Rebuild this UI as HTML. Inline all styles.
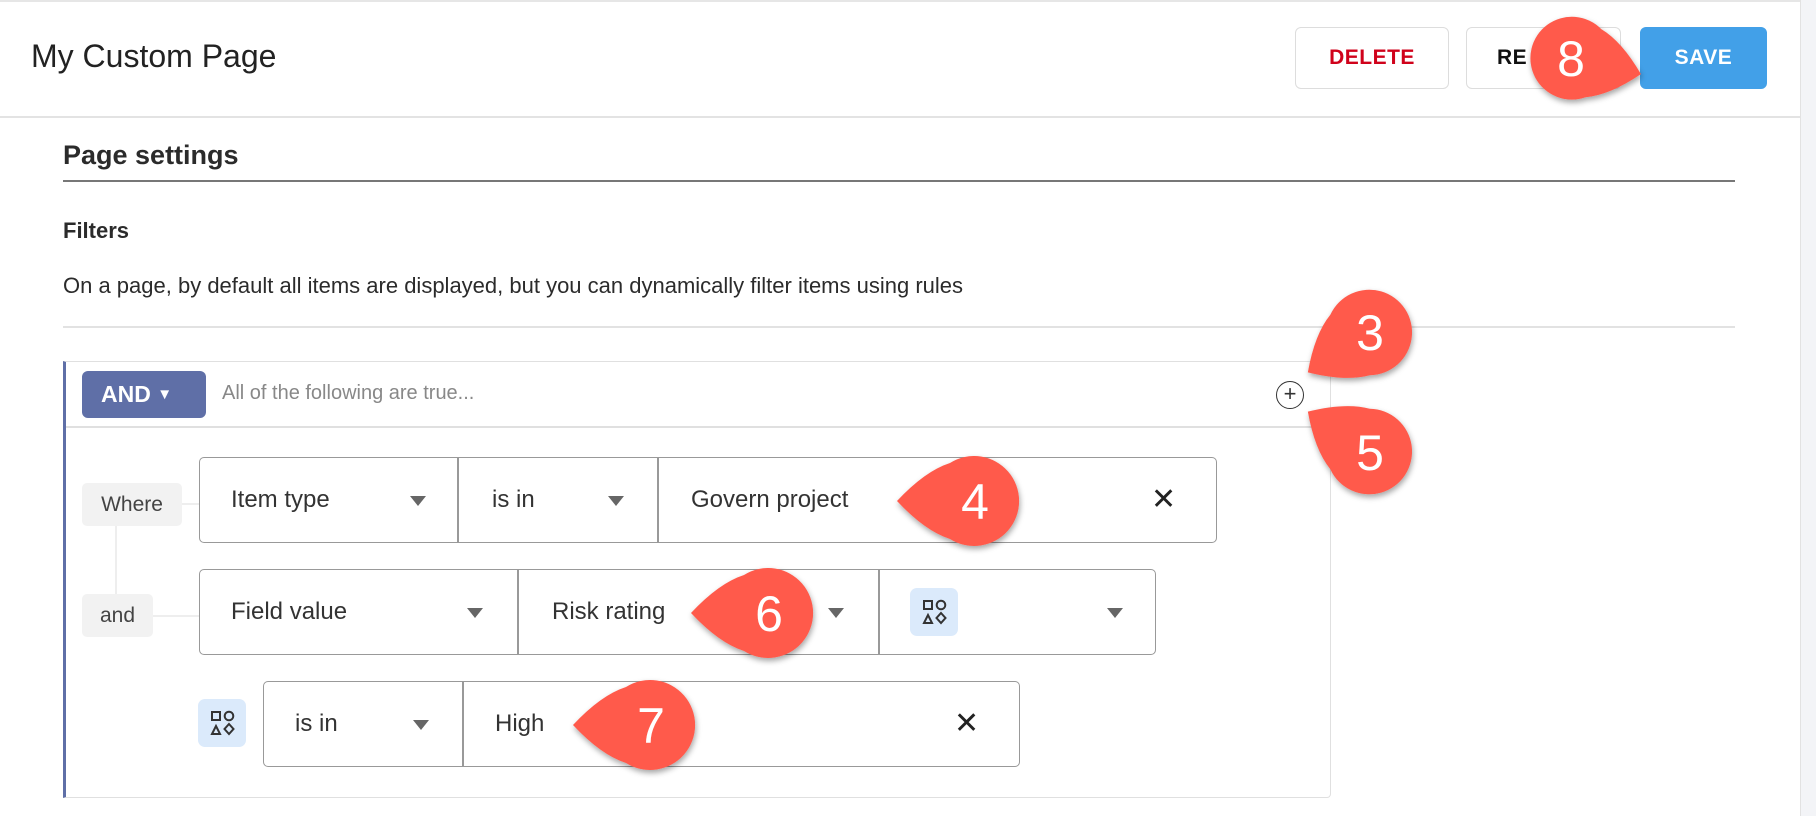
<!DOCTYPE html>
<html><head><meta charset="utf-8"><style>
*{box-sizing:border-box;margin:0;padding:0}
body{width:1816px;height:816px;background:#fff;font-family:"Liberation Sans",sans-serif;color:#333;position:relative;overflow:hidden}
.a{position:absolute}
.btn{position:absolute;top:27px;height:62px;border:1.5px solid #ddd;border-radius:6px;font-size:21px;font-weight:bold;display:flex;align-items:center;justify-content:center;letter-spacing:.5px}
.box{position:absolute;border:1.5px solid #999;border-radius:5px;background:#fff}
.div{position:absolute;top:0;bottom:0;width:1.5px;background:#999}
.t{position:absolute;font-size:24px;color:#333;white-space:nowrap}
.tri{position:absolute;width:0;height:0;border-left:8px solid transparent;border-right:8px solid transparent;border-top:10px solid #666}
.tag{position:absolute;background:#f2f2f2;border-radius:5px;font-size:21px;color:#444;display:flex;align-items:center;justify-content:center}
.tile{position:absolute;background:#dbeafb;border-radius:7px}
</style></head><body>
<div class="a" style="left:0;top:0;width:1800px;height:2px;background:#e6e6e6"></div>
<div class="a" style="left:1800px;top:0;width:16px;height:816px;background:#f3f4f7;border-left:1.5px solid #e2e2e2"></div>
<div class="a" style="left:0;top:116px;width:1800px;height:2px;background:#e3e3e3"></div>
<div class="t" style="left:31px;top:38px;font-size:32px;color:#222">My Custom Page</div>
<div class="btn" style="left:1295px;width:154px;color:#d0021b">DELETE</div>
<div class="btn" style="left:1466px;width:155px;color:#111;justify-content:flex-start;padding-left:30px">RE</div>
<div class="btn" style="left:1640px;width:127px;background:#42a0e8;border-color:#42a0e8;color:#fff">SAVE</div>

<div class="t" style="left:63px;top:140px;font-size:27px;font-weight:bold;color:#2b2b2b">Page settings</div>
<div class="a" style="left:63px;top:180px;width:1672px;height:2px;background:#777"></div>
<div class="t" style="left:63px;top:218px;font-size:22px;font-weight:bold;color:#2b2b2b">Filters</div>
<div class="t" style="left:63px;top:273px;font-size:22px;color:#2b2b2b">On a page, by default all items are displayed, but you can dynamically filter items using rules</div>
<div class="a" style="left:63px;top:326px;width:1672px;height:2px;background:#e2e2e2"></div>

<div class="a" style="left:63px;top:361px;width:1268px;height:437px;border:1.5px solid #e0e0e0;border-left:3px solid #5f6fa7;border-radius:0 4px 4px 0"></div>
<div class="a" style="left:66px;top:426px;width:1264px;height:1.5px;background:#e0e0e0"></div>
<div class="a" style="left:82px;top:371px;width:124px;height:47px;background:#5f6fa7;border-radius:6px;color:#fff;font-weight:bold;font-size:23px;padding:10px 0 0 19px">AND <span style="font-size:15px;position:relative;top:-3px">▼</span></div>
<div class="t" style="left:222px;top:382px;font-size:20px;color:#888">All of the following are true...</div>
<div class="a" style="left:1276px;top:381px;width:28px;height:28px;border:1.5px solid #333;border-radius:50%;text-align:center;font-size:22px;line-height:24px;color:#333">+</div>

<div class="a" style="left:115px;top:526px;width:2px;height:70px;background:#eee"></div>
<div class="a" style="left:182px;top:503px;width:18px;height:2px;background:#eee"></div>
<div class="a" style="left:153px;top:615px;width:47px;height:2px;background:#eee"></div>
<div class="tag" style="left:82px;top:483px;width:100px;height:43px">Where</div>
<div class="tag" style="left:82px;top:594px;width:71px;height:43px">and</div>

<div class="box" style="left:199px;top:457px;width:1018px;height:86px">
<div class="div" style="left:257px"></div><div class="div" style="left:457px"></div>
<div class="t" style="left:31px;top:28px">Item type</div><div class="tri" style="left:210px;top:38px"></div>
<div class="t" style="left:292px;top:28px">is in</div><div class="tri" style="left:408px;top:38px"></div>
<div class="t" style="left:491px;top:28px">Govern project</div>
<div class="t" style="left:951px;top:24px;font-size:30px;color:#222">✕</div>
</div>

<div class="box" style="left:199px;top:569px;width:957px;height:86px">
<div class="div" style="left:317px"></div><div class="div" style="left:678px"></div>
<div class="t" style="left:31px;top:28px">Field value</div><div class="tri" style="left:267px;top:38px"></div>
<div class="t" style="left:352px;top:28px">Risk rating</div><div class="tri" style="left:628px;top:38px"></div>
<div class="tri" style="left:907px;top:38px"></div>
</div>
<div class="tile" style="left:910px;top:588px;width:48px;height:48px"></div>
<div class="tile" style="left:198px;top:699px;width:48px;height:48px"></div>
<svg class="a" style="left:0;top:0" width="1816" height="816">
<g id="ic" fill="none" stroke="#333" stroke-width="2">
<rect x="924" y="601" width="8" height="8"/><circle cx="941" cy="605" r="4.3"/>
<path d="M924 623 L928 615 L932 623 Z"/><path d="M941 613 L945.5 618 L941 623 L936.5 618 Z"/>
</g>
<use href="#ic" transform="translate(-712 111)"/>
</svg>

<div class="box" style="left:263px;top:681px;width:757px;height:86px">
<div class="div" style="left:198px"></div>
<div class="t" style="left:31px;top:28px">is in</div><div class="tri" style="left:149px;top:38px"></div>
<div class="t" style="left:231px;top:28px">High</div>
<div class="t" style="left:690px;top:24px;font-size:30px;color:#222">✕</div>
</div>

<svg class="a" style="left:0;top:0" width="1816" height="816">
<defs>
<filter id="sh" x="-30%" y="-30%" width="160%" height="160%"><feDropShadow dx="1" dy="3" stdDeviation="3" flood-color="#000" flood-opacity="0.35"/></filter>
<path id="drop" d="M-78 0 Q-50 -30 -25 -38 A45 45 0 1 1 -25 38 Q-50 30 -78 0 Z" fill="#ff5a4b"/>
</defs>
<g font-family="Liberation Sans,sans-serif" font-size="50" fill="#fff" text-anchor="middle" filter="url(#sh)">
<g transform="translate(1571 58)"><use href="#drop" transform="rotate(-167) scale(0.92)"/><text y="18">8</text></g>
<g transform="translate(1370 332)"><use href="#drop" transform="rotate(-33) scale(0.95)"/><text y="18">3</text></g>
<g transform="translate(1370 452)"><use href="#drop" transform="rotate(33) scale(0.95)"/><text y="18">5</text></g>
<g transform="translate(975 501)"><use href="#drop"/><text y="18">4</text></g>
<g transform="translate(769 613)"><use href="#drop"/><text y="18">6</text></g>
<g transform="translate(651 725)"><use href="#drop"/><text y="18">7</text></g>
</g>
</svg>
</body></html>
